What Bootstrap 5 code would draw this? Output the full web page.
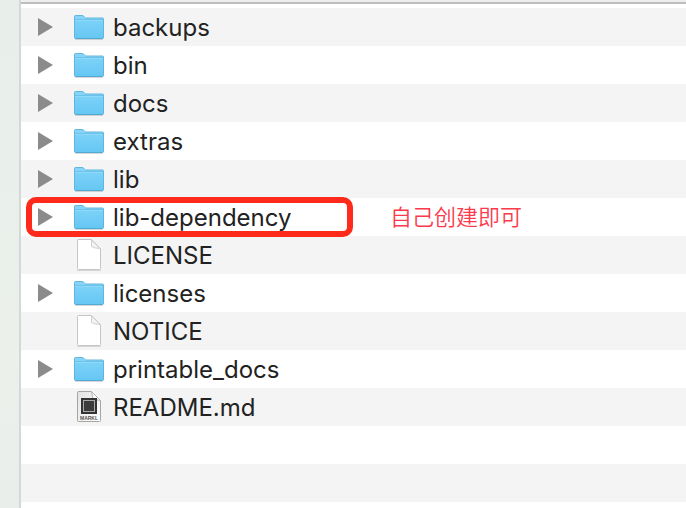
<!DOCTYPE html>
<html lang="zh-CN">
<head>
<meta charset="utf-8">
<meta name="viewport" content="width=device-width, initial-scale=1">
<title>Files</title>
<link href="https://cdn.jsdelivr.net/npm/bootstrap@5.3.0/dist/css/bootstrap.min.css" rel="stylesheet">
<style>
  body { font-family: Inter, "Noto Sans CJK SC", sans-serif; color: #222; background: #fff; }
  .desktop-edge { width: 21px; background: linear-gradient(#e8eeea, #ebf0eb 70%, #eaeeeb); border-right: 2px solid #d3d9d6; }
  .list-head { height: 4px; background: #eee; border-bottom: 2px solid #bebebe; }
  .file-list { padding-top: 4px; }
  .file-row { height: 38px; padding-left: 17px; }
  .file-row:nth-child(odd) { background: #f4f4f4; }
  .toggle { width: 15px; height: 18px; }
  .toggle svg, .file-icon { display: block; }
  .file-icon { width: 32px; height: 34px; margin-left: 20px; margin-bottom: 2px; }
  .file-name { font-size: 24px; line-height: 38px; padding-top: 2px; margin-left: 8px; white-space: nowrap; }
  .highlight-box { left: 5px; top: -1px; width: 327px; height: 40px; border: 6px solid #ff2a1b; border-radius: 10px; pointer-events: none; }
  .note { left: 369px; top: 0; font-family: "Noto Sans CJK SC", sans-serif; font-size: 22px; font-weight: 350; line-height: 34px; color: #fb3b4c; white-space: nowrap; }
</style>
<script src="https://cdn.jsdelivr.net/npm/bootstrap@5.3.0/dist/js/bootstrap.bundle.min.js"></script>
</head>
<body>
<svg width="0" height="0" class="position-absolute" aria-hidden="true">
  <defs>
    <linearGradient id="folderFill" x1="0" y1="0" x2="0" y2="1"><stop offset="0" stop-color="#7dd2f8"/><stop offset="1" stop-color="#66c7f3"/></linearGradient>
    <linearGradient id="mdFill" x1="0" y1="0" x2="1" y2="1"><stop offset="0" stop-color="#e2e2e2"/><stop offset="1" stop-color="#fff"/></linearGradient>
    <symbol id="arrow" viewBox="0 0 15 18"><path d="M0 0L15 9L0 18Z" fill="#8b8b8b"/></symbol>
    <symbol id="folder" viewBox="0 0 32 34">
      <path d="M2 30.5H30" stroke="#000" stroke-opacity=".15"/>
      <path d="M1.5 28V7.500Q1.500 6.500 2.500 6.500H9Q10 6.500 10.700 7.200L12 8.500Q12.500 9 13.500 9H29.500Q30.500 9 30.500 10V28Z" fill="#86d5f8" stroke="#60b7dd"/>
      <path d="M2 10.500H30V28.500Q30 29 29.500 29H2.500Q2 29 2 28.500Z" fill="url(#folderFill)"/>
      <path d="M2 10.500H30" stroke="#6cc2e8"/>
      <path d="M2 11.500H30" stroke="#8fdafa"/>
      <path d="M1.500 28V28.500Q1.500 29.500 2.500 29.500H29.500Q30.500 29.500 30.500 28.500V28" fill="none" stroke="#4fa9d2"/>
    </symbol>
    <symbol id="page" viewBox="0 0 32 34">
      <path d="M4 33.500H28" stroke="#000" stroke-opacity=".12"/>
      <path d="M5.500 2.500H18.500L27.500 11.500V31.500Q27.500 32.500 26.500 32.500H5.500Q4.500 32.500 4.500 31.500V3.500Q4.500 2.500 5.500 2.500Z" fill="#fff" stroke="#c5c5c5"/>
      <path d="M18.500 3V9.500Q20 11 27 11.500Z" fill="#f4f4f4" stroke="#cfcfcf"/>
    </symbol>
    <symbol id="markdown" viewBox="0 0 32 34">
      <path d="M5.500 2.500H18.500L27.500 11.500V31.500Q27.500 32.500 26.500 32.500H5.500Q4.500 32.500 4.500 31.500V3.500Q4.500 2.500 5.500 2.500Z" fill="url(#mdFill)" stroke="#a5a5a5"/>
      <path d="M18.500 2.500L20 10L27.500 11.500Z" fill="#fff" stroke="#b5b5b5"/>
      <rect x="8" y="9" width="16" height="16" fill="#333"/>
      <rect x="10.500" y="11.500" width="11" height="11" fill="#3a3a3a" stroke="#aaa"/>
      <text x="16" y="31" text-anchor="middle" font-family="Liberation Sans, sans-serif" font-size="5" font-weight="700" fill="#555">MARKL</text>
    </symbol>
  </defs>
</svg>
<div class="d-flex min-vh-100">
  <div class="desktop-edge flex-shrink-0"></div>
  <main class="flex-grow-1 overflow-hidden">
    <div class="list-head"></div>
    <ul class="file-list list-unstyled mb-0">
      <li class="file-row d-flex align-items-center"><button type="button" class="toggle btn border-0 rounded-0 p-0" aria-label="Expand backups"><svg width="15" height="18"><use href="#arrow"/></svg></button><svg class="file-icon"><use href="#folder"/></svg><span class="file-name">backups</span></li>
      <li class="file-row d-flex align-items-center"><button type="button" class="toggle btn border-0 rounded-0 p-0" aria-label="Expand bin"><svg width="15" height="18"><use href="#arrow"/></svg></button><svg class="file-icon"><use href="#folder"/></svg><span class="file-name">bin</span></li>
      <li class="file-row d-flex align-items-center"><button type="button" class="toggle btn border-0 rounded-0 p-0" aria-label="Expand docs"><svg width="15" height="18"><use href="#arrow"/></svg></button><svg class="file-icon"><use href="#folder"/></svg><span class="file-name">docs</span></li>
      <li class="file-row d-flex align-items-center"><button type="button" class="toggle btn border-0 rounded-0 p-0" aria-label="Expand extras"><svg width="15" height="18"><use href="#arrow"/></svg></button><svg class="file-icon"><use href="#folder"/></svg><span class="file-name">extras</span></li>
      <li class="file-row d-flex align-items-center"><button type="button" class="toggle btn border-0 rounded-0 p-0" aria-label="Expand lib"><svg width="15" height="18"><use href="#arrow"/></svg></button><svg class="file-icon"><use href="#folder"/></svg><span class="file-name">lib</span></li>
      <li class="file-row d-flex align-items-center position-relative"><button type="button" class="toggle btn border-0 rounded-0 p-0" aria-label="Expand lib-dependency"><svg width="15" height="18"><use href="#arrow"/></svg></button><svg class="file-icon"><use href="#folder"/></svg><span class="file-name">lib-dependency</span><span class="highlight-box position-absolute"></span><span class="note position-absolute">自己创建即可</span></li>
      <li class="file-row d-flex align-items-center"><span class="toggle"></span><svg class="file-icon"><use href="#page"/></svg><span class="file-name">LICENSE</span></li>
      <li class="file-row d-flex align-items-center"><button type="button" class="toggle btn border-0 rounded-0 p-0" aria-label="Expand licenses"><svg width="15" height="18"><use href="#arrow"/></svg></button><svg class="file-icon"><use href="#folder"/></svg><span class="file-name">licenses</span></li>
      <li class="file-row d-flex align-items-center"><span class="toggle"></span><svg class="file-icon"><use href="#page"/></svg><span class="file-name">NOTICE</span></li>
      <li class="file-row d-flex align-items-center"><button type="button" class="toggle btn border-0 rounded-0 p-0" aria-label="Expand printable_docs"><svg width="15" height="18"><use href="#arrow"/></svg></button><svg class="file-icon"><use href="#folder"/></svg><span class="file-name">printable_docs</span></li>
      <li class="file-row d-flex align-items-center"><span class="toggle"></span><svg class="file-icon"><use href="#markdown"/></svg><span class="file-name">README.md</span></li>
      <li class="file-row" aria-hidden="true"></li>
      <li class="file-row" aria-hidden="true"></li>
    </ul>
  </main>
</div>
</body>
</html>
